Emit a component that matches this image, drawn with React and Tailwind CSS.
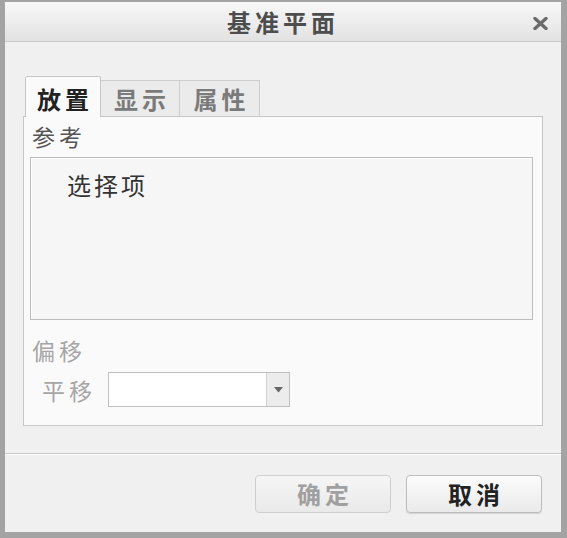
export default function App() {
  return (
    <div className="w-[567px] h-[538px] flex flex-col border-t-2 border-l-[5px] border-r-[6px] border-b-[6px] border-[#a3a3a3] bg-[#f0f0f0] font-['Noto_Sans_CJK_SC','Noto_Sans',sans-serif] overflow-hidden">
      {/* Title bar */}
      <div className="relative h-[40px] shrink-0 border-b border-[#c9c9c9] bg-gradient-to-b from-[#f8f8f8] to-[#e2e2e2] flex items-center justify-center">
        <span className="text-[24px] leading-none font-bold text-[#4d4d4d] tracking-[4px]">基准平面</span>
        <div className="absolute right-[13px] top-[15px] w-[15px] h-[13px]">
          <svg width="15" height="13" viewBox="0 0 15 13">
            <path d="M2 1.5 L13 11.5 M13 1.5 L2 11.5" stroke="#6b6b6b" strokeWidth="3.4" strokeLinecap="round" />
          </svg>
        </div>
      </div>

      {/* Body */}
      <div className="flex-1 flex flex-col">
        <div className="px-[18px] pt-[34px]">
          {/* Tabs */}
          <div className="flex items-end h-[40px] pl-[2px]">
            <div className="relative z-10 -mb-px w-[76px] h-[41px] border border-b-0 border-[#c6c6c6] bg-[#fafafa] rounded-t-[2px] flex items-center justify-center pt-[3px] pl-[4px] text-[24px] leading-none font-bold text-[#222] tracking-[4px]">
              放置
            </div>
            <div className="w-[79px] h-[36px] border border-l-0 border-b-0 border-[#cdcdcd] bg-[#ebebeb] flex items-center justify-center pl-[4px] text-[24px] leading-none font-bold text-[#7a7a7a] tracking-[4px]">
              显示
            </div>
            <div className="w-[80px] h-[36px] border border-l-0 border-b-0 border-[#cdcdcd] bg-[#ebebeb] flex items-center justify-center pl-[4px] text-[24px] leading-none font-bold text-[#7a7a7a] tracking-[4px]">
              属性
            </div>
          </div>

          {/* Panel */}
          <div className="h-[310px] border border-[#c6c6c6] bg-[#fafafa] flex flex-col pl-[6px] pr-[9px]">
            <div className="mt-[6px] ml-[2px] text-[23px] leading-[26px] text-[#555] tracking-[4px]">参考</div>
            <div className="mt-[8px] h-[163px] border border-[#bcbcbc] bg-[#f6f6f6] shadow-[inset_1px_1px_0_#fff] pl-[36px] pt-[13px]">
              <div className="text-[24px] leading-[28px] text-[#333] tracking-[3px]">选择项</div>
            </div>
            <div className="mt-[17px] ml-[2px] text-[23px] leading-[26px] text-[#a6a6a6] tracking-[4px]">偏移</div>
            <div className="mt-[9px] flex items-center pl-[12px]">
              <span className="text-[23px] leading-[26px] text-[#a6a6a6] tracking-[4px]">平移</span>
              <div className="ml-[12px] w-[182px] h-[35px] border border-[#c0c0c0] bg-white flex">
                <div className="flex-1" />
                <div className="w-[23px] border-l border-[#d2d2d2] bg-[#ececec] flex items-center justify-center">
                  <svg width="9" height="6" viewBox="0 0 9 6">
                    <path d="M0 0 L9 0 L4.5 5.5 Z" fill="#666" />
                  </svg>
                </div>
              </div>
            </div>
          </div>
        </div>

        {/* Separator */}
        <div className="mt-[27px] h-px bg-[#c9c9c9]" />
        <div className="h-px bg-white" />

        {/* Footer */}
        <div className="flex justify-end gap-[15px] pt-[20px] pr-[19px]">
          <button className="w-[136px] h-[38px] rounded-[4px] border border-[#cfcfcf] bg-gradient-to-b from-[#f6f6f6] to-[#e9e9e9] flex items-center justify-center pl-[4px] text-[24px] leading-none font-bold text-[#a0a0a0] tracking-[4px]">
            确定
          </button>
          <button className="w-[136px] h-[38px] rounded-[4px] border border-[#bdbdbd] bg-gradient-to-b from-[#fcfcfc] to-[#eaeaea] shadow-[0_1px_1px_rgba(0,0,0,0.12)] flex items-center justify-center pl-[4px] text-[24px] leading-none font-bold text-[#222] tracking-[4px]">
            取消
          </button>
        </div>
      </div>
    </div>
  );
}
